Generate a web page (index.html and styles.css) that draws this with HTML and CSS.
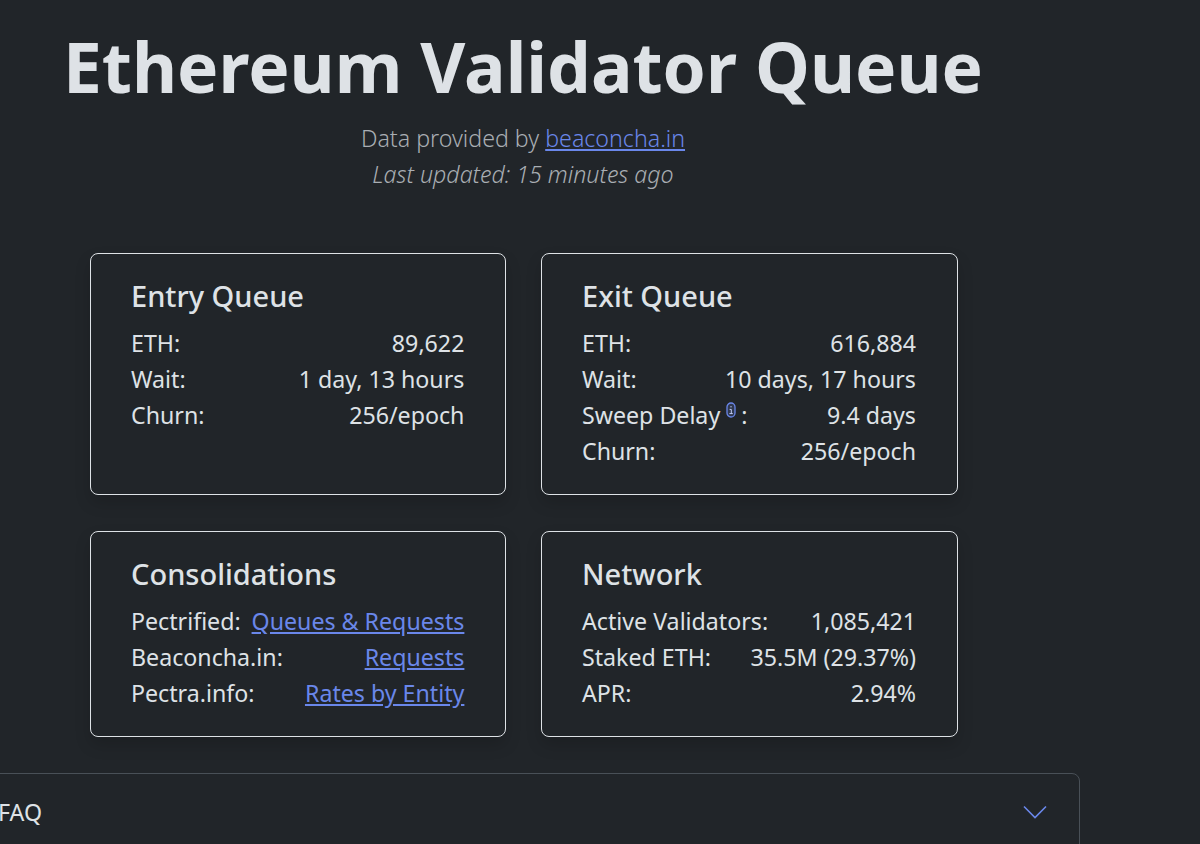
FILE: index.html
```html
<!DOCTYPE html>
<html lang="en">
<head>
<meta charset="utf-8">
<title>Ethereum Validator Queue</title>
<link rel="stylesheet" href="styles.css">
</head>
<body>
<main class="page">
  <header class="hero">
    <h1 class="title">Ethereum Validator Queue</h1>
    <p class="source">Data provided by <a href="#">beaconcha.in</a></p>
    <p class="updated">Last updated: 15 minutes ago</p>
  </header>
  <section class="cards">
    <article class="card">
      <h2 class="card-title">Entry Queue</h2>
      <div class="row"><span>ETH:</span><span>89,622</span></div>
      <div class="row"><span>Wait:</span><span>1 day, 13 hours</span></div>
      <div class="row"><span>Churn:</span><span>256/epoch</span></div>
    </article>
    <article class="card">
      <h2 class="card-title">Exit Queue</h2>
      <div class="row"><span>ETH:</span><span>616,884</span></div>
      <div class="row"><span>Wait:</span><span>10 days, 17 hours</span></div>
      <div class="row"><span class="with-icon">Sweep Delay
        <svg class="info" viewBox="0 0 10 16" width="10" height="16" aria-hidden="true"><rect x="1" y="1" width="8" height="14" rx="4" fill="currentColor" fill-opacity=".2" stroke="currentColor" stroke-width="1.3"/><path d="M5 4v1.4M3.6 7.4H5.3V11.6M3.4 11.6H6.8" fill="none" stroke="#c3cdf5" stroke-width="1"/></svg><span class="colon">:</span></span><span>9.4 days</span></div>
      <div class="row"><span>Churn:</span><span>256/epoch</span></div>
    </article>
    <article class="card">
      <h2 class="card-title">Consolidations</h2>
      <div class="row"><span>Pectrified:</span><a href="#">Queues &amp; Requests</a></div>
      <div class="row"><span>Beaconcha.in:</span><a href="#">Requests</a></div>
      <div class="row"><span>Pectra.info:</span><a href="#">Rates by Entity</a></div>
    </article>
    <article class="card">
      <h2 class="card-title">Network</h2>
      <div class="row"><span>Active Validators:</span><span>1,085,421</span></div>
      <div class="row"><span>Staked ETH:</span><span>35.5M (29.37%)</span></div>
      <div class="row"><span>APR:</span><span>2.94%</span></div>
    </article>
  </section>
  <section class="accordion">
    <div class="accordion-head">
      <span>FAQ</span>
      <svg class="chevron" viewBox="0 0 24 14" width="24" height="14" aria-hidden="true"><path d="M1 1.5 12 12.5 23 1.5" fill="none" stroke="currentColor" stroke-width="1.6"/></svg>
    </div>
  </section>
</main>
</body>
</html>
```
FILE: styles.css
```css
* { box-sizing: border-box; }
html, body { margin: 0; height: 100%; overflow: hidden; }
body {
  background: #212529;
  color: #dee2e6;
  font-family: "Noto Sans", "Open Sans", sans-serif;
  font-size: 23.2px;
  line-height: 36px;
}
a { color: #6a87ea; text-decoration: underline; }
.page { width: 1113px; margin-left: -33px; }
.hero { text-align: center; padding-top: 25px; padding-right: 1px; }
.title { margin: 0 0 12px; font-size: 69.4px; line-height: 83px; font-weight: 700; }
.source, .updated { margin: 0; font-size: 23.2px; font-weight: 300; color: #a9aeb3; }
.updated { font-style: italic; }
.cards {
  display: grid;
  grid-template-columns: 416.4px 417px;
  grid-template-rows: 242px 206px;
  gap: 36px 34.6px;
  margin-top: 61px;
  padding-left: 123px;
}
.card {
  border: 1px solid #dee2e6;
  border-radius: 8px;
  padding: 24px 41px 24px 40px;
  box-shadow: 0 8px 16px rgba(0, 0, 0, .15);
}
.card-title { margin: 0 0 11px; font-size: 29px; line-height: 36px; font-weight: 500; }
.row { display: flex; justify-content: space-between; }
.with-icon { display: inline-flex; align-items: center; gap: 6px; }
.colon { margin-left: -1px; }
.info { color: #6a87ea; margin-top: -10px; }
.accordion {
  margin-top: 36px;
  border: 1px solid #495057;
  border-radius: 8px 8px 0 0;
  height: 90px;
}
.accordion-head {
  display: flex;
  justify-content: space-between;
  align-items: center;
  padding: 20px 32px 0 30px;
}
.chevron { color: #6a87ea; }
```
